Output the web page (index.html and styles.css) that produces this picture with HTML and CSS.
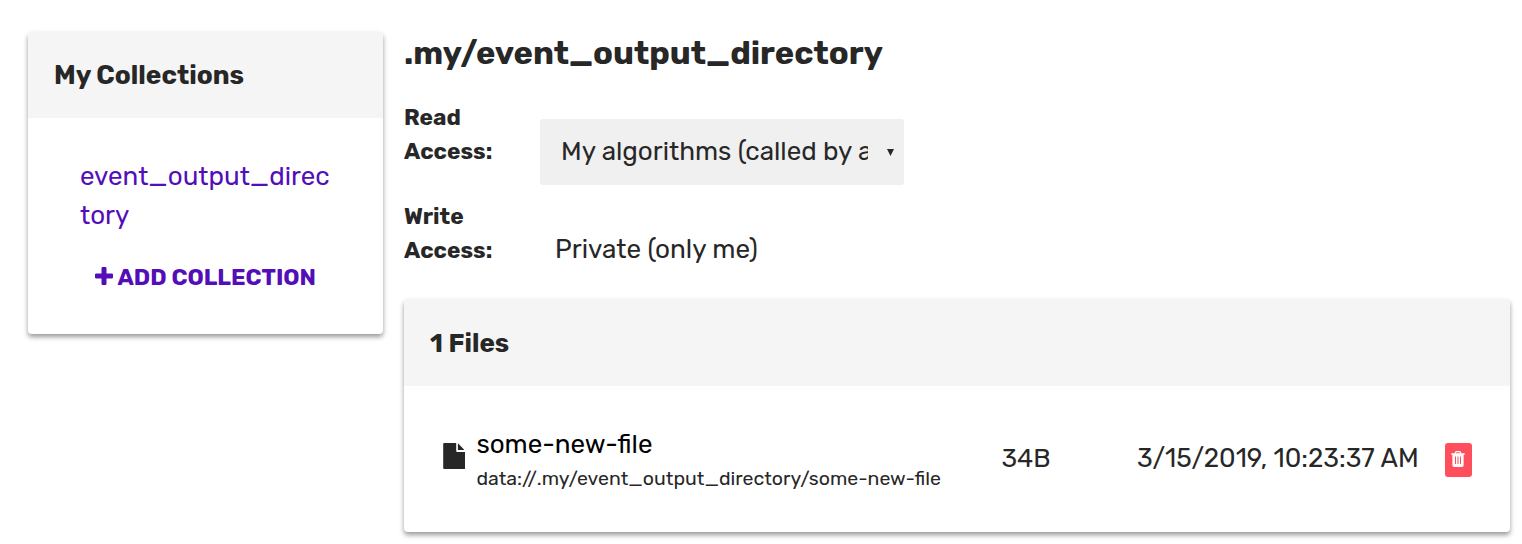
FILE: index.html
```html
<!DOCTYPE html>
<html lang="en">
<head>
<meta charset="utf-8">
<title>My Collections</title>
<link rel="stylesheet" href="styles.css">
</head>
<body>
<div class="page">
  <aside class="panel sidebar">
    <h2 class="panel-header">My Collections</h2>
    <div class="sidebar-body">
      <a class="collection-link">event_output_directory</a>
      <a class="add-link"><svg class="plus" viewBox="0 0 18 18"><path d="M7.700 0h2.600q1.200 0 1.200 1.200v5.300h5.300q1.200 0 1.200 1.200v2.600q0 1.200-1.200 1.200h-5.300v5.300q0 1.200-1.200 1.200H7.700q-1.200 0-1.200-1.200v-5.300H1.200Q0 11.500 0 10.300V7.700q0-1.200 1.200-1.200h5.300V1.200Q6.500 0 7.700 0z"/></svg>ADD COLLECTION</a>
    </div>
  </aside>
  <main class="main">
    <h1 class="title">.my/event_output_directory</h1>
    <div class="access read">
      <div class="label">Read Access:</div>
      <div class="select"><span class="select-text">My algorithms (called by any user)</span><svg class="caret" viewBox="0 0 7 7"><path d="M0 0h7L3.500 7z"/></svg></div>
    </div>
    <div class="access write">
      <div class="label">Write Access:</div>
      <div class="value">Private (only me)</div>
    </div>
    <section class="panel files">
      <h2 class="panel-header">1 Files</h2>
      <div class="file-row">
        <svg class="file-icon" viewBox="0 0 22 26"><path d="M1 0h12v8q0 1 1 1h8v16q0 1-1 1H1q-1 0-1-1V1q0-1 1-1zM14.700 0.500q.6.3 1 .8l4.600 4.600q.5.5.7 1.100h-6.300z"/></svg>
        <div class="file-info">
          <div class="file-name">some-new-file</div>
          <div class="file-path">data://.my/event_output_directory/some-new-file</div>
        </div>
        <div class="file-size">34B</div>
        <div class="file-date">3/15/2019, 10:23:37 AM</div>
        <button class="delete" aria-label="Delete"><svg class="trash" viewBox="0 0 14 16"><path fill-rule="evenodd" d="M5.200 0h3.600q.7 0 1 .8l.6 1.500H13.700v1.400h-1.100v10.300q0 2-1.500 2H2.900q-1.500 0-1.500-2V3.700H.3V2.300h3.300L4.200 .8Q4.500 0 5.200 0zM4.900 2.300h4.200l-.4-1.100H5.300zM4 5.500v7.500h1V5.500zm2.500 0v7.500h1V5.500zm2.500 0v7.500h1V5.500z"/></svg></button>
      </div>
    </section>
  </main>
</div>
</body>
</html>
```
FILE: styles.css
```css
* { box-sizing: border-box; }
body { margin: 0; background: #fff; color: #272727; font: 26px/39px Rubik, Roboto, sans-serif; }
h1, h2 { margin: 0; }
.page { display: flex; align-items: flex-start; gap: 21px; min-height: 544px; padding: 32px 12px 0 28px; }
.panel { background: #fff; border-radius: 4px; box-shadow: 0 3px 5px rgba(0, 0, 0, .4); }
.panel-header { height: 86px; padding: 0 26px; background: #f5f5f5; border-radius: 4px 4px 0 0; font-size: 26.250px; line-height: 86px; font-weight: 700; white-space: nowrap; }
.sidebar { width: 355px; height: 302px; flex: none; }
.sidebar-body { display: flex; flex-direction: column; padding: 39px 52px 0; color: #530eb8; }
.collection-link { overflow-wrap: anywhere; }
.add-link { display: flex; align-items: center; height: 39px; margin: 23px 0 0 14.500px; font-size: 22.850px; font-weight: 700; white-space: nowrap; }
.plus { width: 18px; height: 18px; margin: 0 5px 3px 0; fill: currentColor; flex: none; }
.main { flex: 1; min-width: 0; }
.title { font-size: 32.700px; line-height: 42px; font-weight: 700; white-space: nowrap; }
.access { display: flex; }
.read { margin-top: 27px; height: 99px; }
.write { height: 99px; }
.label { width: 110px; margin-right: 26px; flex: none; font-size: 22.750px; line-height: 34px; font-weight: 700; }
.select { display: flex; align-items: center; width: 364px; height: 66px; margin-top: 18px; padding: 0 10px 0 21px; background: #f0f0f0; border-radius: 3px; }
.select-text { width: 307px; margin-bottom: 2px; overflow: hidden; white-space: nowrap; }
.caret { width: 7px; height: 7px; margin-left: 19px; fill: #272727; }
.value { margin: 30px 0 0 15px; font-size: 26.100px; white-space: nowrap; }
.files { height: 233px; }
.files .panel-header { height: 87px; font-size: 26px; line-height: 89px; }
.file-row { display: flex; padding: 39px 38px 0 38.600px; white-space: nowrap; }
.file-icon { width: 22.400px; height: 26px; margin-top: 18px; fill: #272727; flex: none; }
.file-info { width: 525px; margin-left: 11.400px; flex: none; }
.file-name { color: #000; }
.file-path { font-size: 19.500px; line-height: 29px; }
.file-size { width: 135.600px; margin-top: 14px; flex: none; }
.file-date { margin-top: 14px; font-size: 26.100px; flex: none; }
.delete { display: flex; justify-content: center; width: 27px; height: 34px; margin: 18px 0 0 auto; padding: 8px 1px 0 0; border: 0; border-radius: 3px; background: #ff4f5d; flex: none; }
.trash { width: 14px; height: 16px; fill: #fff; }
```
